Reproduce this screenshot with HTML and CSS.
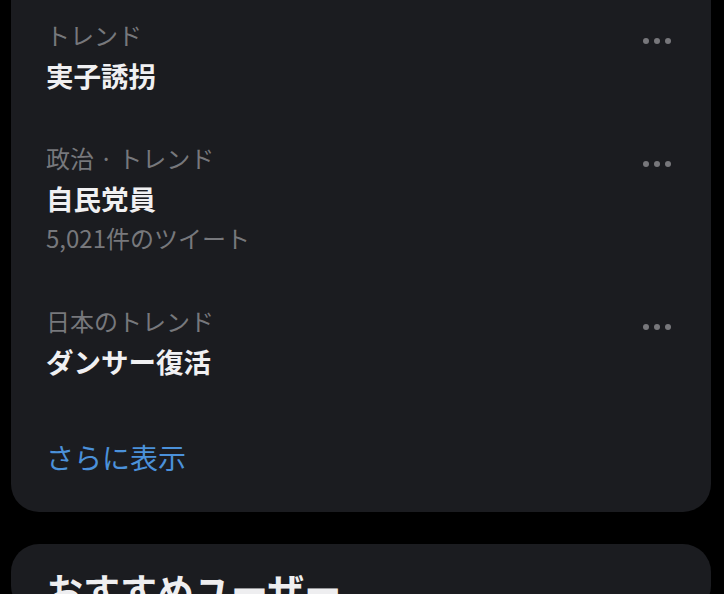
FILE: index.html
```html
<!DOCTYPE html>
<html lang="ja">
<head>
  <meta charset="UTF-8" />
  <meta name="viewport" content="width=device-width, initial-scale=1.0"/>
  <title>トレンド</title>
  <link rel="stylesheet" href="styles.css">
</head>
<body>

  <!-- Trends card (scrolled, top is off screen) -->
  <section class="card cut">
    <div class="trend">
      <div class="trend-text">
        <p class="label">トレンド</p>
        <p class="title">実子誘拐</p>
      </div>
      <button class="more-btn" aria-label="もっと見る">
        <svg width="34" height="20" viewBox="0 0 34 20"><circle cx="8" cy="10" r="3"/><circle cx="19" cy="10" r="3"/><circle cx="30" cy="10" r="3"/></svg>
      </button>
    </div>

    <div class="trend">
      <div class="trend-text">
        <p class="label">政治 · トレンド</p>
        <p class="title">自民党員</p>
        <p class="label">5,021件のツイート</p>
      </div>
      <button class="more-btn" aria-label="もっと見る">
        <svg width="34" height="20" viewBox="0 0 34 20"><circle cx="8" cy="10" r="3"/><circle cx="19" cy="10" r="3"/><circle cx="30" cy="10" r="3"/></svg>
      </button>
    </div>

    <div class="trend">
      <div class="trend-text">
        <p class="label">日本のトレンド</p>
        <p class="title">ダンサー復活</p>
      </div>
      <button class="more-btn" aria-label="もっと見る">
        <svg width="34" height="20" viewBox="0 0 34 20"><circle cx="8" cy="10" r="3"/><circle cx="19" cy="10" r="3"/><circle cx="30" cy="10" r="3"/></svg>
      </button>
    </div>

    <a class="show-more" href="#">さらに表示</a>
  </section>

  <!-- Recommended users -->
  <section class="card">
    <h2 class="card-heading">おすすめユーザー</h2>
  </section>

</body>
</html>
```

FILE: styles.css
```css
body {
  font-family: "Noto Sans CJK JP", "Noto Sans", sans-serif;
  background-color: #000;
  color: #e8e8ea;
  margin: 0;
  padding: 0 13px 0 11px;
  overflow: hidden;
}

p {
  margin: 0;
}

.card {
  background-color: #1b1c20;
  border-radius: 28px;
  padding: 0 35px;
  margin-bottom: 32px;
}

.card.cut {
  border-radius: 0 0 28px 28px;
  margin-top: -6px;
}

.trend {
  display: flex;
  justify-content: space-between;
  align-items: flex-start;
  padding: 21px 0 22px;
}

.label {
  font-size: 24px;
  line-height: 40px;
  color: #77787c;
}

.title {
  font-size: 27.5px;
  font-weight: 700;
  line-height: 40px;
  color: #f0f0f2;
}

.more-btn {
  background: none;
  border: none;
  padding: 0;
  margin: 16px 4px 0 0;
  cursor: pointer;
  display: flex;
}

.more-btn svg {
  fill: #77777b;
}

.show-more {
  display: block;
  padding: 34px 0 35px;
  font-size: 28px;
  line-height: 40px;
  color: #4b91da;
  text-decoration: none;
}

.card-heading {
  margin: 0;
  padding-top: 22px;
  font-size: 37px;
  line-height: 48px;
  font-weight: 700;
  color: #eeeef0;
}
```
